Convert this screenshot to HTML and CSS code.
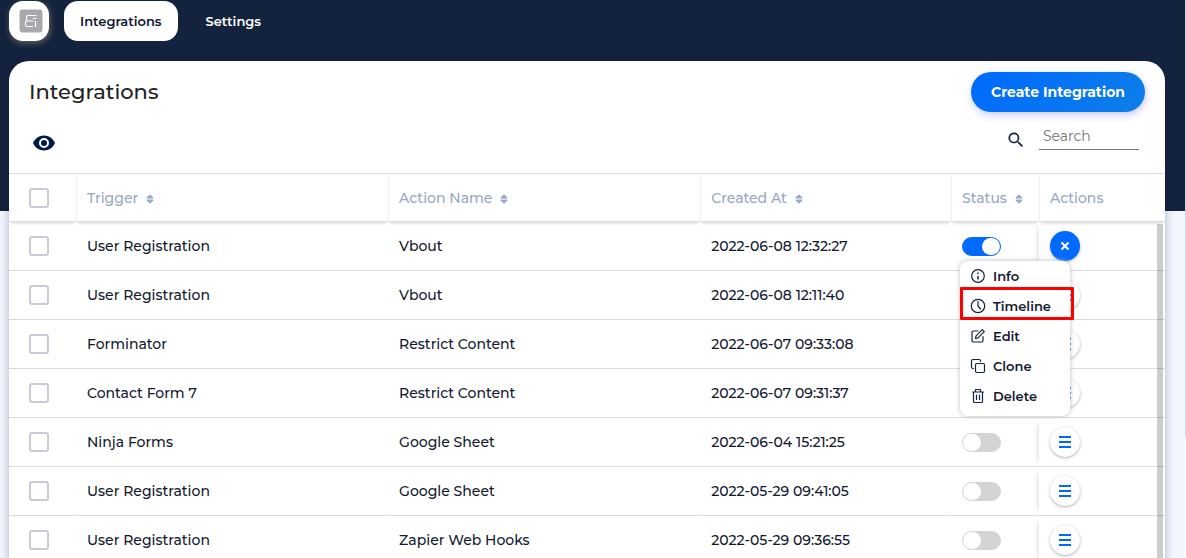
FILE: index.html
```html
<!DOCTYPE html>
<html lang="en">
<head>
<meta charset="utf-8">
<title>Integrations</title>
<link rel="stylesheet" href="styles.css">
</head>
<body>
<svg class="defs" aria-hidden="true">
  <symbol id="sort" viewBox="0 0 8 10"><path d="M1.200 3.800 4 1.200l2.800 2.600zM1.200 6.200 4 8.800l2.800-2.600z" fill="currentColor" stroke="currentColor" stroke-width="1.200" stroke-linejoin="round"/></symbol>
</svg>
<div class="page">
  <header class="topbar">
    <a class="logo" href="#" aria-label="Home">
      <svg width="24" height="24" viewBox="0 0 24 24"><rect x=".5" y=".5" width="23" height="23" rx="3" fill="#a7a9ac"/><path d="M17.500 6.500H9Q7.500 6.500 7.500 8V10.500Q7.500 12 9 12H14.500M8.500 12Q6.500 12 6.500 13.500V16Q6.500 17.500 8 17.500H14M14 9.500H17.500M16.500 12V18" fill="none" stroke="#fff" stroke-width="1.200"/></svg>
    </a>
    <nav class="tabs">
      <a class="tab tab-active" href="#">Integrations</a>
      <a class="tab" href="#">Settings</a>
    </nav>
  </header>
  <main class="card">
    <div class="card-head">
      <h1>Integrations</h1>
      <button class="create" type="button">Create Integration</button>
    </div>
    <div class="tools">
      <button class="eye" type="button" aria-label="Columns">
        <svg width="24" height="24" viewBox="0 0 24 24"><path fill="#001a4d" d="M12 4.500C7 4.500 2.700 7.600 1 12c1.700 4.400 6 7.500 11 7.500s9.300-3.100 11-7.500c-1.700-4.400-6-7.500-11-7.500zM12 17a5 5 0 1 1 0-10 5 5 0 0 1 0 10zm0-8a3 3 0 1 0 0 6 3 3 0 0 0 0-6z"/></svg>
      </button>
      <label class="search">
        <svg width="20" height="20" viewBox="0 0 24 24" aria-hidden="true"><path fill="#13233e" d="M15.500 14h-.8l-.3-.3A6.500 6.500 0 1 0 13.700 14.400l.3.300v.8l5 5 1.500-1.500zm-6 0a4.500 4.500 0 1 1 0-9 4.500 4.500 0 0 1 0 9z"/></svg>
        <input type="text" placeholder="Search" aria-label="Search">
      </label>
    </div>
    <div class="table-wrap">
      <table>
        <colgroup><col class="c-check"><col class="c-name"><col class="c-name"><col><col class="c-status"><col class="c-actions"></colgroup>
        <thead>
          <tr>
            <th><input type="checkbox" aria-label="Select all"></th>
            <th>Trigger <svg class="sort"><use href="#sort"/></svg></th>
            <th>Action Name <svg class="sort"><use href="#sort"/></svg></th>
            <th>Created At <svg class="sort"><use href="#sort"/></svg></th>
            <th>Status <svg class="sort"><use href="#sort"/></svg></th>
            <th>Actions</th>
          </tr>
        </thead>
        <tbody>
          <tr>
            <td><input type="checkbox" aria-label="Select row"></td><td>User Registration</td><td>Vbout</td><td>2022-06-08 12:32:27</td>
            <td><input class="switch" type="checkbox" aria-label="Status" checked></td>
            <td class="act">
              <div class="menu-wrap">
                <button class="more more-open" type="button" aria-label="Close menu"><svg width="10" height="10" viewBox="0 0 10 10"><path d="m1.500 1.500 7 7m0-7-7 7" stroke="#fff" stroke-width="2"/></svg></button>
                <ul class="menu">
                  <li><button type="button"><svg viewBox="0 0 16 16"><circle cx="8" cy="8" r="6.300"/><path d="M8 8.500V11M8 5v.6" stroke-width="1.500"/></svg>Info</button></li>
                  <li class="marked"><button type="button"><svg viewBox="0 0 16 16"><circle cx="8" cy="8" r="6.700"/><path d="M8 3.500V8l2.500 3"/></svg>Timeline</button></li>
                  <li><button type="button"><svg viewBox="0 0 16 16"><path d="M8 3H3.200Q2 3 2 4.200v8.600Q2 14 3.200 14h8.600q1.200 0 1.200-1.200V8.500M5.500 10.500l.6-2.600 6.200-6.200 2 2-6.200 6.200z"/></svg>Edit</button></li>
                  <li><button type="button"><svg viewBox="0 0 16 16"><rect x="5.500" y="5.500" width="9" height="9" rx="1.500"/><path d="M3.500 10.500H3Q1.500 10.500 1.500 9V3Q1.500 1.500 3 1.500H9Q10.500 1.500 10.500 3v.5"/></svg>Clone</button></li>
                  <li><button type="button"><svg viewBox="0 0 16 16"><path d="M2.500 4h11M5.500 4V1.500h5V4M3.500 4v9.500Q3.500 14.500 4.500 14.500h7q1 0 1-1V4M6.500 7v4.500M9.500 7v4.500"/></svg>Delete</button></li>
                </ul>
              </div>
            </td>
          </tr>
          <tr><td><input type="checkbox" aria-label="Select row"></td><td>User Registration</td><td>Vbout</td><td>2022-06-08 12:11:40</td><td><input class="switch" type="checkbox" aria-label="Status"></td><td class="act"><button class="more" type="button" aria-label="Actions"><span class="bars"></span></button></td></tr>
          <tr><td><input type="checkbox" aria-label="Select row"></td><td>Forminator</td><td>Restrict Content</td><td>2022-06-07 09:33:08</td><td><input class="switch" type="checkbox" aria-label="Status"></td><td class="act"><button class="more" type="button" aria-label="Actions"><span class="bars"></span></button></td></tr>
          <tr><td><input type="checkbox" aria-label="Select row"></td><td>Contact Form 7</td><td>Restrict Content</td><td>2022-06-07 09:31:37</td><td><input class="switch" type="checkbox" aria-label="Status"></td><td class="act"><button class="more" type="button" aria-label="Actions"><span class="bars"></span></button></td></tr>
          <tr><td><input type="checkbox" aria-label="Select row"></td><td>Ninja Forms</td><td>Google Sheet</td><td>2022-06-04 15:21:25</td><td><input class="switch" type="checkbox" aria-label="Status"></td><td class="act"><button class="more" type="button" aria-label="Actions"><span class="bars"></span></button></td></tr>
          <tr><td><input type="checkbox" aria-label="Select row"></td><td>User Registration</td><td>Google Sheet</td><td>2022-05-29 09:41:05</td><td><input class="switch" type="checkbox" aria-label="Status"></td><td class="act"><button class="more" type="button" aria-label="Actions"><span class="bars"></span></button></td></tr>
          <tr><td><input type="checkbox" aria-label="Select row"></td><td>User Registration</td><td>Zapier Web Hooks</td><td>2022-05-29 09:36:55</td><td><input class="switch" type="checkbox" aria-label="Status"></td><td class="act"><button class="more" type="button" aria-label="Actions"><span class="bars"></span></button></td></tr>
        </tbody>
      </table>
      <div class="scroll-thumb"></div>
    </div>
  </main>
</div>
<div class="page-thumb"></div>
</body>
</html>
```

FILE: styles.css
```css
* { box-sizing: border-box; }
body {
  margin: 0;
  height: 100vh;
  overflow: hidden;
  display: flex;
  background: #fff;
  color: #13233e;
  font: 500 14px/20px Montserrat, Inter, "Liberation Sans", sans-serif;
}
button, input { font: inherit; color: inherit; margin: 0; }
button { border: 0; padding: 0; background: none; cursor: pointer; }
a { color: inherit; text-decoration: none; }
.defs { position: absolute; width: 0; height: 0; }
.page {
  flex: 1;
  padding: 1px 20px 0 9px;
  background: linear-gradient(#13233e 211px, #f3f6ff 211px);
}
.page-thumb { width: 1px; height: 437px; background: #d4d5dc; }

.topbar { display: flex; gap: 15px; height: 40px; }
.logo {
  display: grid;
  place-items: center;
  width: 40px;
  height: 40px;
  border-radius: 14px;
  background: #fff;
  box-shadow: 1px 2px 6px #66645e;
}
.logo svg { margin-left: 3px; }
.tabs { display: flex; gap: 12px; }
.tab { padding: 10px 16px; border-radius: 14px; color: #fff; font-size: 13px; font-weight: 600; }
.tab-active { background: #fff; color: #10152e; }

.card {
  margin-top: 20px;
  border-radius: 20px 20px 0 0;
  background: #fff;
  box-shadow: 0 2px 10px rgba(20, 20, 80, .3);
}
.card-head { display: flex; justify-content: space-between; padding: 11px 20px 0; }
h1 { margin: 0; font-size: 21px; line-height: 40px; font-weight: 500; color: #222; }
.create {
  height: 40px;
  padding: 0 20px;
  border-radius: 20px;
  background: linear-gradient(135deg, #0069ff, #0d7fe8);
  color: #fff;
  font-weight: 700;
  box-shadow: 1px 3px 8px #c9c9ff;
}
.tools { display: flex; justify-content: space-between; padding: 12px 26px 18px 23px; }
.eye { height: 24px; margin-top: 7px; }
.eye svg { display: block; }
.search { display: flex; align-items: flex-start; gap: 13px; }
.search svg { margin-top: 6px; }
.search input {
  width: 100px;
  height: 26px;
  padding: 0 4px 2px;
  border: 0;
  border-bottom: 1px solid #777;
  background: none;
  font-size: 14px;
  font-weight: 400;
}
.search input::placeholder { color: #757575; opacity: 1; }

.table-wrap { position: relative; border-top: 1px solid #d9dae0; }
table { width: 100%; table-layout: fixed; border-collapse: separate; border-spacing: 0; }
.c-check { width: 67px; }
.c-name { width: 27%; }
.c-status { width: 88px; }
.c-actions { width: 126px; }
th, td { padding: 0 0 0 10px; text-align: left; white-space: nowrap; border-left: 1px solid transparent; }
th:first-child, td:first-child { padding-left: 20px; border-left: 0; }
th {
  height: 48px;
  border-bottom: 1px solid #dcdcdc;
  border-left-color: #eff0f3;
  box-shadow: 0 4px 2px -2px #e4e4e4;
  color: #96a8c2;
  font-weight: 500;
}
td { height: 49px; border-bottom: 1px solid #dadbe6; color: #13182f; }
.sort { width: 8px; height: 10px; margin-left: 4px; vertical-align: -1px; }
input[type="checkbox"] {
  appearance: none;
  display: block;
  width: 20px;
  height: 20px;
  border: 2px solid #c8cad6;
  border-radius: 3px;
  background: #fff;
}
input.switch[type="checkbox"] {
  width: 39px;
  height: 19px;
  border: 1px solid #d4d4d4;
  border-radius: 10px;
  background: #d4d4d4;
}
.switch::before { content: ""; display: block; width: 18px; height: 17px; border-radius: 9px; background: #fff; }
input.switch[type="checkbox"]:checked { border-color: #0069ff; background: #0069ff; }
.switch:checked::before { margin-left: 19px; }
.act { box-shadow: -6px 0 6px -6px #d0d0d0; }
.more {
  display: grid;
  place-items: center;
  width: 30px;
  height: 30px;
  border-radius: 50%;
  background: #fff;
  box-shadow: 0 1px 3px #b0b0b0;
}
.more-open { background: #0069ff; }
.bars {
  width: 12px;
  height: 12px;
  border-top: 2px solid #0069ff;
  border-bottom: 2px solid #0069ff;
  background: linear-gradient(transparent 3px, #0069ff 3px, #0069ff 5px, transparent 5px);
}
.menu-wrap { position: relative; width: 30px; }
.menu {
  position: absolute;
  z-index: 2;
  top: 30px;
  right: 10px;
  width: 110px;
  margin: 0;
  padding: 0 0 5px;
  list-style: none;
  border-radius: 8px;
  background: #fff;
  box-shadow: 0 0 5px #bbb;
}
.menu button {
  display: flex;
  align-items: center;
  gap: 7px;
  width: 100%;
  height: 30px;
  padding-left: 10px;
  font-size: 13px;
  font-weight: 600;
}
.menu svg { width: 16px; height: 16px; fill: none; stroke: #13233e; stroke-width: 1.2; stroke-linejoin: round; stroke-linecap: round; }
.marked { position: relative; }
.marked::after {
  content: "";
  position: absolute;
  inset: -4px -4px 1px 0;
  border: 3px solid #ff0000;
  border-radius: 1px;
  pointer-events: none;
}
.scroll-thumb { position: absolute; z-index: 1; top: 50px; right: 2px; bottom: 0; width: 6px; background: rgba(0, 0, 0, .2); }
```
